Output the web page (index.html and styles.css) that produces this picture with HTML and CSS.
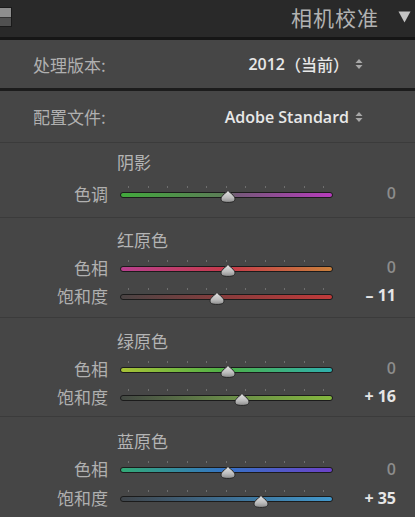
FILE: index.html
```html
<!DOCTYPE html>
<html lang="zh-CN">
<head>
<meta charset="utf-8">
<title>相机校准</title>
<link rel="stylesheet" href="styles.css">
</head>
<body>
<div class="panel">
  <header class="hdr">
    <span class="hdr-icon"><span class="hi-top"></span><span class="hi-bot"></span></span>
    <span class="hdr-title">相机校准</span>
    <svg class="hdr-arrow" width="13" height="12" viewBox="0 0 13 12"><path d="M0.5 0.5 H12.5 L6.5 11.5 Z" fill="#c4c4c4"/></svg>
  </header>

  <section class="opt opt-process">
    <span class="opt-label">处理版本:</span>
    <span class="opt-right">
      <span class="opt-value"><span class="num">2012</span><span class="cjk">（当前）</span></span>
      <svg class="spin" width="8" height="12" viewBox="0 0 8 12"><path d="M4 1 L7.5 5 H0.5 Z M4 11 L7.5 7 H0.5 Z" fill="#a8a8a8"/></svg>
    </span>
  </section>

  <section class="opt opt-profile">
    <span class="opt-label">配置文件:</span>
    <span class="opt-right">
      <span class="opt-value num">Adobe Standard</span>
      <svg class="spin" width="8" height="12" viewBox="0 0 8 12"><path d="M4 1 L7.5 5 H0.5 Z M4 11 L7.5 7 H0.5 Z" fill="#a8a8a8"/></svg>
    </span>
  </section>

  <section class="grp grp-shadow">
    <div class="grp-title">阴影</div>
    <div class="row">
      <span class="row-label">色调</span>
      <div class="slider">
        <div class="ticks"><i></i><i></i><i></i><i></i><i></i><i></i><i></i><i></i><i></i><i></i><i></i></div>
        <div class="track t-tint"></div>
        <svg class="thumb" style="left:108px" width="16" height="13" viewBox="0 0 16 13"><path d="M8 0.6 C9.6 2.8 14.6 5.2 14.9 8.6 C15.1 11.3 13 12.4 8 12.4 C3 12.4 0.9 11.3 1.1 8.6 C1.4 5.2 6.4 2.8 8 0.6 Z" fill="url(#thg)" stroke="#262626" stroke-width="1"/></svg>
      </div>
      <span class="row-val zero">0</span>
    </div>
  </section>

  <section class="grp grp-red">
    <div class="grp-title">红原色</div>
    <div class="row">
      <span class="row-label">色相</span>
      <div class="slider">
        <div class="ticks"><i></i><i></i><i></i><i></i><i></i><i></i><i></i><i></i><i></i><i></i><i></i></div>
        <div class="track t-rhue"></div>
        <svg class="thumb" style="left:108px" width="16" height="13" viewBox="0 0 16 13"><path d="M8 0.6 C9.6 2.8 14.6 5.2 14.9 8.6 C15.1 11.3 13 12.4 8 12.4 C3 12.4 0.9 11.3 1.1 8.6 C1.4 5.2 6.4 2.8 8 0.6 Z" fill="url(#thg)" stroke="#262626" stroke-width="1"/></svg>
      </div>
      <span class="row-val zero">0</span>
    </div>
    <div class="row">
      <span class="row-label">饱和度</span>
      <div class="slider">
        <div class="ticks"><i></i><i></i><i></i><i></i><i></i><i></i><i></i><i></i><i></i><i></i><i></i></div>
        <div class="track t-rsat"></div>
        <svg class="thumb" style="left:97px" width="16" height="13" viewBox="0 0 16 13"><path d="M8 0.6 C9.6 2.8 14.6 5.2 14.9 8.6 C15.1 11.3 13 12.4 8 12.4 C3 12.4 0.9 11.3 1.1 8.6 C1.4 5.2 6.4 2.8 8 0.6 Z" fill="url(#thg)" stroke="#262626" stroke-width="1"/></svg>
      </div>
      <span class="row-val">– 11</span>
    </div>
  </section>

  <section class="grp grp-green">
    <div class="grp-title">绿原色</div>
    <div class="row">
      <span class="row-label">色相</span>
      <div class="slider">
        <div class="ticks"><i></i><i></i><i></i><i></i><i></i><i></i><i></i><i></i><i></i><i></i><i></i></div>
        <div class="track t-ghue"></div>
        <svg class="thumb" style="left:108px" width="16" height="13" viewBox="0 0 16 13"><path d="M8 0.6 C9.6 2.8 14.6 5.2 14.9 8.6 C15.1 11.3 13 12.4 8 12.4 C3 12.4 0.9 11.3 1.1 8.6 C1.4 5.2 6.4 2.8 8 0.6 Z" fill="url(#thg)" stroke="#262626" stroke-width="1"/></svg>
      </div>
      <span class="row-val zero">0</span>
    </div>
    <div class="row">
      <span class="row-label">饱和度</span>
      <div class="slider">
        <div class="ticks"><i></i><i></i><i></i><i></i><i></i><i></i><i></i><i></i><i></i><i></i><i></i></div>
        <div class="track t-gsat"></div>
        <svg class="thumb" style="left:122px" width="16" height="13" viewBox="0 0 16 13"><path d="M8 0.6 C9.6 2.8 14.6 5.2 14.9 8.6 C15.1 11.3 13 12.4 8 12.4 C3 12.4 0.9 11.3 1.1 8.6 C1.4 5.2 6.4 2.8 8 0.6 Z" fill="url(#thg)" stroke="#262626" stroke-width="1"/></svg>
      </div>
      <span class="row-val">+ 16</span>
    </div>
  </section>

  <section class="grp grp-blue">
    <div class="grp-title">蓝原色</div>
    <div class="row">
      <span class="row-label">色相</span>
      <div class="slider">
        <div class="ticks"><i></i><i></i><i></i><i></i><i></i><i></i><i></i><i></i><i></i><i></i><i></i></div>
        <div class="track t-bhue"></div>
        <svg class="thumb" style="left:108px" width="16" height="13" viewBox="0 0 16 13"><path d="M8 0.6 C9.6 2.8 14.6 5.2 14.9 8.6 C15.1 11.3 13 12.4 8 12.4 C3 12.4 0.9 11.3 1.1 8.6 C1.4 5.2 6.4 2.8 8 0.6 Z" fill="url(#thg)" stroke="#262626" stroke-width="1"/></svg>
      </div>
      <span class="row-val zero">0</span>
    </div>
    <div class="row">
      <span class="row-label">饱和度</span>
      <div class="slider">
        <div class="ticks"><i></i><i></i><i></i><i></i><i></i><i></i><i></i><i></i><i></i><i></i><i></i></div>
        <div class="track t-bsat"></div>
        <svg class="thumb" style="left:141px" width="16" height="13" viewBox="0 0 16 13"><path d="M8 0.6 C9.6 2.8 14.6 5.2 14.9 8.6 C15.1 11.3 13 12.4 8 12.4 C3 12.4 0.9 11.3 1.1 8.6 C1.4 5.2 6.4 2.8 8 0.6 Z" fill="url(#thg)" stroke="#262626" stroke-width="1"/></svg>
      </div>
      <span class="row-val">+ 35</span>
    </div>
  </section>

  <svg class="defs" width="0" height="0">
    <defs>
      <linearGradient id="thg" x1="0" y1="0" x2="0" y2="1">
        <stop offset="0" stop-color="#e4e4e4"/>
        <stop offset="0.6" stop-color="#bcbcbc"/>
        <stop offset="1" stop-color="#8c8c8c"/>
      </linearGradient>
    </defs>
  </svg>
</div>
</body>
</html>
```

FILE: styles.css
```css
html, body {
  margin: 0;
  padding: 0;
  background: #464646;
}

.panel {
  width: 415px;
  height: 517px;
  overflow: hidden;
  background: #464646;
  font-family: "Noto Sans CJK SC", "Noto Sans", sans-serif;
  color: #b4b4b4;
}

.panel *, .panel *::before, .panel *::after {
  box-sizing: border-box;
}

.hdr {
  height: 40px;
  background: #292929;
  border-bottom: 3px solid #161616;
  display: flex;
  align-items: center;
}

.hdr-icon {
  width: 13px;
  height: 20px;
  margin-left: -1px;
  margin-top: -3px;
  border: 1px solid #1a1a1a;
  display: flex;
  flex-direction: column;
}

.hi-top {
  flex: 1;
  background: #8e8e8e;
  border-bottom: 1px solid #333;
}

.hi-bot {
  flex: 1;
  background: #505050;
}

.hdr-title {
  margin-left: auto;
  font-size: 21px;
  letter-spacing: 1px;
  color: #b2b2b2;
  line-height: 1;
  margin-top: -3px;
}

.hdr-arrow {
  margin-left: 19px;
  margin-right: 4px;
  margin-top: -3px;
}

.opt {
  display: flex;
  align-items: center;
  padding-left: 33px;
  padding-right: 52px;
}

.opt-process {
  height: 51px;
  border-bottom: 3px solid #1c1c1c;
}

.opt-profile {
  height: 52px;
  border-bottom: 1px solid #3b3b3b;
}

.opt-label {
  font-size: 17px;
  color: #b0b0b0;
  line-height: 1;
}

.opt-right {
  margin-left: auto;
  display: flex;
  align-items: center;
  gap: 6px;
}

.opt-value {
  color: #e8e8e8;
  font-size: 16px;
  line-height: 1;
  display: flex;
  align-items: center;
}

.num {
  font-family: "Open Sans", "Liberation Sans", sans-serif;
  font-weight: 600;
}

.cjk {
  font-family: "Noto Sans CJK SC", sans-serif;
  font-size: 16px;
  font-weight: 500;
}

.grp {
  border-bottom: 1px solid #3b3b3b;
}

.grp-shadow {
  height: 75px;
  padding-top: 9px;
}

.grp-shadow .grp-title {
  margin-bottom: 7px;
}

.grp-red {
  height: 100px;
  padding-top: 12px;
}

.grp-green {
  height: 99px;
  padding-top: 13px;
}

.grp-blue {
  padding-top: 14px;
  border-bottom: none;
}

.grp-blue .row {
  height: 29px;
}

.grp-title {
  height: 20px;
  line-height: 20px;
  padding-left: 117px;
  font-size: 17px;
  color: #b4b4b4;
  margin-bottom: 3px;
}

.row {
  height: 28px;
  display: grid;
  grid-template-columns: 108px 213px 1fr;
  column-gap: 12px;
  align-items: center;
}

.row-label {
  text-align: right;
  font-size: 17px;
  line-height: 1;
  color: #b0b0b0;
}

.slider {
  position: relative;
  height: 28px;
  display: flex;
  flex-direction: column;
  justify-content: center;
}

.ticks {
  display: flex;
  justify-content: space-between;
  padding: 0 9px 0 8px;
  height: 2px;
  margin-bottom: 4px;
  margin-top: -3px;
}

.ticks i {
  display: block;
  width: 1px;
  height: 2px;
  background: #6e6e6e;
}

.track {
  height: 6px;
  border: 1px solid #1b1b1b;
  border-radius: 4px;
}

.t-tint { background: linear-gradient(to right, #42a83c, #5b7d56 48%, #76587a 55%, #b63cbc); }
.t-rhue { background: linear-gradient(to right, #b8408e, #c63a4a 50%, #c9803c); }
.t-rsat { background: linear-gradient(to right, #4a4444, #8a3c3c 50%, #c03a3a); }
.t-ghue { background: linear-gradient(to right, #a8c236, #4cb048 50%, #2fb0ae); }
.t-gsat { background: linear-gradient(to right, #434843, #688a48 50%, #84b83e); }
.t-bhue { background: linear-gradient(to right, #32aa76, #3572c6 50%, #6c42c8); }
.t-bsat { background: linear-gradient(to right, #40454a, #3e6e92 50%, #4298cc); }

.thumb {
  position: absolute;
  top: 11px;
  transform: translateX(-50%);
}

.row-val {
  text-align: right;
  padding-right: 19px;
  font-family: "Open Sans", "Liberation Sans", sans-serif;
  font-weight: 700;
  font-size: 16px;
  line-height: 1;
  color: #e6e6e6;
}

.row-val.zero {
  color: #8c8c8c;
  font-weight: 600;
}

.defs {
  position: absolute;
  width: 0;
  height: 0;
}
```
